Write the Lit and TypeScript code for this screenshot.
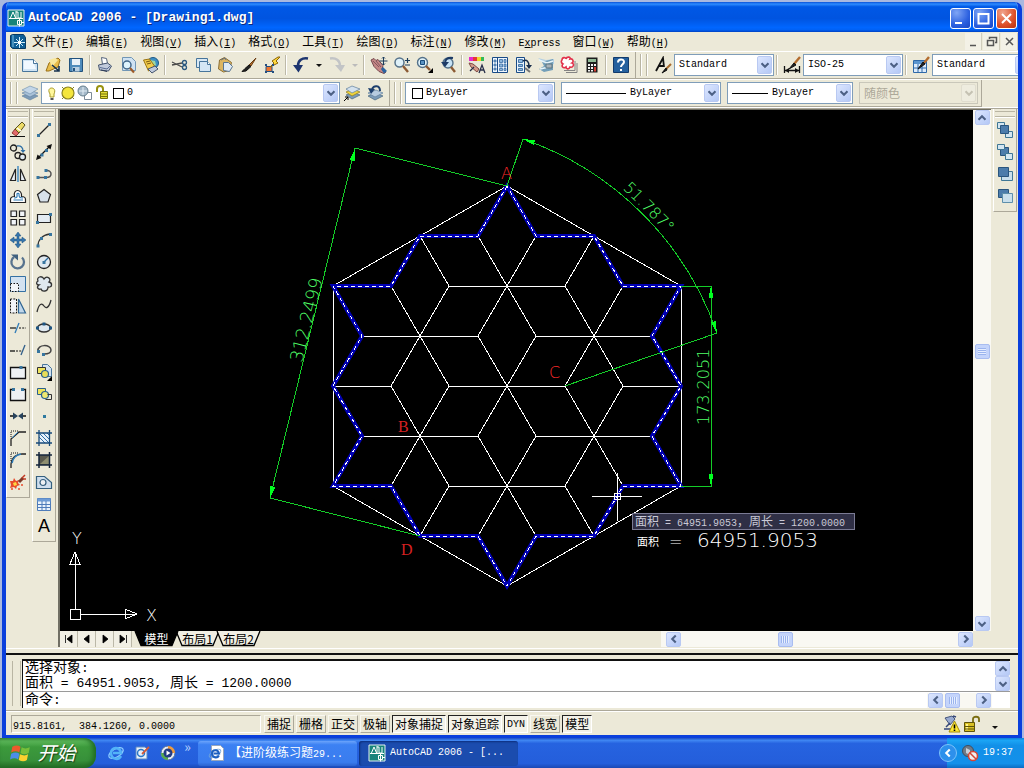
import { LitElement, html, svg, css, nothing } from "lit";
import { customElement } from "lit/decorators.js";
import { classMap } from "lit/directives/class-map.js";

const INK = "#1c3c5c";

/* Toolbar glyphs, all on an 18 x 18 grid. */
const icons: Record<string, unknown> = {
  new: svg`<path d="M1.5 3.5h11l4 4v8h-15z" fill="#cfe3f3" stroke="#47759b"/><path d="M3 5h9l3 8H3z" fill="#f0f8ff"/><path d="M12.5 3.5v4h4" fill="#fff" stroke="#47759b"/>`,
  open: svg`<path d="M2 15l3-8 9-5 2 2-2 7-9 4z" fill="#e9bd4b" stroke="#9a7118"/><path d="M5 4l6-2 3 2-6 7z" fill="#f8e79c"/><path d="M8 9l7 6m0-5v5h-5" stroke="#16324f" stroke-width="1.6" fill="none"/>`,
  save: svg`<path d="M2.500 2.500h13v13h-13z" fill="#4e8bbb" stroke="#22527d"/><path d="M5 3h8v6H5z" fill="#e8f1f8"/><path d="M5.500 11h7v4.500h-7z" fill="#b8cfe2"/><path d="M6 12h2v3H6z" fill="#22527d"/>`,
  print: svg`<path d="M5.500 1.500l5 1 1 5-5 1z" fill="#fff" stroke="#58677e"/><path d="M2.500 9l9-2 4 3-3 5-9-1z" fill="#c2cbdc" stroke="#45546f"/><path d="M4 11.500l7 1.500 3-3" stroke="#5b6d93" fill="none"/><path d="M5 14l6 1.500" stroke="#2f3d59"/>`,
  preview: svg`<path d="M3.500 1.500h9l4 4v9h-13z" fill="#cfe2f2" stroke="#7196b5"/><circle cx="8" cy="9" r="4" fill="#ddf3fd" stroke="#40678a" stroke-width="1.500"/><path d="M11 12l4 4.500" stroke="#9c5b2a" stroke-width="2.200"/>`,
  publish: svg`<circle cx="11" cy="7" r="5.500" fill="#3d8fc4" stroke="#205a86"/><path d="M8 4l5 1 1 4-3 2z" fill="#9fd8a0"/><path d="M1.500 4l6-1 5 7-6 5z" fill="#f2cc4b" stroke="#9b7413"/><path d="M4 6l4-1M5 8l4-1" stroke="#7a5910"/><path d="M6 13l7-3 3 3-6 4z" fill="#bfc9db" stroke="#44546e"/>`,
  cut: svg`<path d="M1 6l10 5M1 9l10-2" stroke="#4a4a4a" stroke-width="1.300"/><circle cx="13.500" cy="6.500" r="2" fill="none" stroke="#2c5a80" stroke-width="1.300"/><circle cx="13.500" cy="11.500" r="2" fill="none" stroke="#2c5a80" stroke-width="1.300"/>`,
  copy: svg`<path d="M2.500 2.500h11v9h-11z" fill="#d8e8f4" stroke="#47759b"/><path d="M5.500 5.500h8l3 3v7h-11z" fill="#d4e6f4" stroke="#47759b"/><path d="M13.500 5.500v3h3" fill="#fff" stroke="#47759b"/>`,
  paste: svg`<path d="M2.500 4l5-2.500 7 5-2 8-6 1.500-5-3z" fill="#dcb562" stroke="#8b6e33"/><path d="M6.500 6.500h5l4 4-3 5-6-1z" fill="#dfeaf5" stroke="#5a7590"/><path d="M4 4l4-2 1 2" fill="none" stroke="#63707f"/>`,
  brush: svg`<path d="M16 2l-7 7 2 1z" fill="#b7702c" stroke="#6a3c12"/><path d="M9 9l2 1.500-5 4.500-4 .5 3-3z" fill="#222" stroke="#111"/>`,
  match: svg`<path d="M3 10.500h6v5H3z" fill="#f0742d" stroke="#234e80"/><path d="M15 1l-6 4 2 2-4 4 8-4-2-2 4-4z" fill="#ffd93b" stroke="#8d6508"/><path d="M2 9h2M9 9h2M2 16h2M9 16h2" stroke="#234e80" stroke-width="2"/>`,
  undo: svg`<path d="M16 2.500C10 1.500 6 4.500 6 10" fill="none" stroke="#1d3570" stroke-width="2.600"/><path d="M1 9h10l-4.500 7.500z" fill="#1d3570"/>`,
  redo: svg`<path d="M2 2.500c6-1 10 2 10 7.500" fill="none" stroke="#c2c4c6" stroke-width="2.400"/><path d="M7 9h10l-4 7z" fill="#c2c4c6"/>`,
  pan: svg`<path d="M1 4l3-1.500 2 2 2-1 5 6-1 4 4 2.500-2 1.500-5-2-5-5z" fill="#c48786" stroke="#74484e"/><path d="M3 5l6 6M6 5l5 6" stroke="#855660"/><path d="M11 13l2-2 4 4-3 2.500z" fill="#2b62a0"/><path d="M13.500 1v8M9.500 5h8M12 2.500l1.500-1.500 1.500 1.500M12 7.500l1.500 1.500 1.500-1.500" stroke="${INK}" fill="none"/>`,
  zoom: svg`<circle cx="6.500" cy="6.500" r="4.500" fill="#dff1f9" stroke="#55728a" stroke-width="1.500"/><path d="M10 10l5 6" stroke="#8c5a34" stroke-width="2.400"/><path d="M12 4.500h5M14.500 2v5M12 9h5" stroke="${INK}" stroke-width="1.200"/>`,
  zoomwin: svg`<circle cx="6.500" cy="6.500" r="5" fill="#dff1f9" stroke="#55728a" stroke-width="1.400"/><path d="M4.500 4.500h4v4h-4z" fill="#5a93c3" stroke="#194b7b"/><path d="M10 10l4 4" stroke="#8c5a34" stroke-width="2.400"/><path d="M17 12v5h-5z" fill="#000"/>`,
  zoomprev: svg`<circle cx="9" cy="7" r="5" fill="#c7e2f4" stroke="#55728a" stroke-width="1.400"/><path d="M12 11l4 5" stroke="#8c5a34" stroke-width="2.400"/><path d="M14 2C8 1 6 4 6 7" stroke="#1d3b66" stroke-width="2.200" fill="none"/><path d="M2 6h8l-4 5z" fill="#1d3b66"/>`,
  props: svg`<path d="M1 1h4v4H1z" fill="#e22ad0"/><path d="M5 1h4v4H5z" fill="#e73737"/><path d="M9 1h4v4H9z" fill="#efd72b"/><path d="M13 1h3v4h-3z" fill="#31bb55"/><path d="M1 7l4 1 6 5-2 3-6-5z" fill="#d69b8b" stroke="#7c4943"/><path d="M2 15l4-4M11 17l3-8 3 8M12 14h4" stroke="#282f49" stroke-width="1.300" fill="none"/>`,
  design: svg`<path d="M1.500 1.500h15v15h-15z" fill="#eff7ff" stroke="#194b87"/><path d="M6.500 2v14" stroke="#194b87"/><path d="M3 4h2v2H3zM3 8h2v2H3zM3 12h2v2H3zM8.500 3.500h3v3h-3zM13 3.500h2v3h-2zM8.500 8h3v3h-3zM13 8h2v3h-2zM8.500 12.500h3v2h-3zM13 12.500h2v2h-2z" fill="#8eb7dc" stroke="#295f99" stroke-width=".7"/>`,
  tool: svg`<path d="M2.500 1.500h8v15h-8z" fill="#eaf4fd" stroke="#194b87"/><path d="M4.500 3.500h4v3h-4zM4.500 8.500h4v2h-4zM4.500 12.500h4v2h-4z" fill="#8eb7dc" stroke="#295f99" stroke-width=".8"/><path d="M9 5c4-2 6 1 6 5" stroke="#172c4a" stroke-width="1.500" fill="none"/><path d="M12 9h6l-3 4z" fill="#172c4a"/><path d="M11 12l5 4" stroke="#777" stroke-width="2"/>`,
  sheet: svg`<path d="M1 2l8 2 8-1v5l-7 2z" fill="#b3cfe2"/><path d="M5 6l11-3v11l-9 2-5-3 5-3z" fill="#739fb9"/><path d="M2 4l8 3 6-2M3 13l9-2" stroke="#e7f4fa" stroke-width="1.500" fill="none"/><path d="M9 8h6v4H9z" fill="#a8b2b8" stroke="#5b7481"/>`,
  markup: svg`<path d="M4 14.500h11V5M6 16.500h11V7" fill="none" stroke="#848484"/><path d="M2 4c0-3 4-3 4-1 1-3 5-2 4 0 3-1 4 3 2 4 3 1 1 5-2 4-1 3-4 2-4 0-3 2-5-1-3-3-2-1-2-3-1-4z" fill="#fff" stroke="#e2314b" stroke-width="1.600"/>`,
  calc: svg`<path d="M3.500 1.500h11v15h-11z" fill="#1d1d1d"/><path d="M5 3h8v3H5z" fill="#8fb996"/><path d="M5 8h2v2H5zM8 8h2v2H8zM11 8h2v2h-2zM5 11h2v2H5zM8 11h2v2H8zM5 14h2v1.500H5zM8 14h2v1.500H8z" fill="#f3f3f3"/><path d="M11 11h2v4.500h-2z" fill="#d23c33"/>`,
  help: svg`<path d="M1.500 1.500h15v15h-15z" fill="#24609e" stroke="#123b6c"/><path d="M6 6.500c0-4 6-4 6-.5 0 2-3 2.500-3 5" fill="none" stroke="#fff" stroke-width="2"/><path d="M8 13h2v2H8z" fill="#fff"/>`,
  textstyle: svg`<path d="M2 15L9 2l1 9M5 10h5" fill="none" stroke="#111" stroke-width="1.800"/><path d="M17 8l-5 5" stroke="#a86a2d" stroke-width="2"/><path d="M12 12l1 2-5 3z" fill="#111" stroke="#111"/>`,
  dimstyle: svg`<path d="M1.500 10v7M16.500 10v7M2 14.500h14" stroke="#111" stroke-width="1.300"/><path d="M2 14.500l4-2.500v5zM16 14.500l-4-2.500v5z" fill="#111"/><path d="M17 1l-6 7" stroke="#b36c2e" stroke-width="2.400"/><path d="M11 7l2 2-7 4z" fill="#222" stroke="#111"/>`,
  tabstyle: svg`<path d="M1.500 4.500h13v12h-13z" fill="#dcebfb" stroke="#2e68a8"/><path d="M2 5h12v3H2z" fill="#5b95cf"/><path d="M2 12h12M6 8v8M10 8v8" stroke="#2e68a8"/><path d="M17 1l-5 6" stroke="#b36c2e" stroke-width="2.400"/><path d="M11 6l2 2-7 5z" fill="#222" stroke="#111"/>`,
  layers: svg`<path d="M1 12l8-3 8 3-8 4z" fill="#7c9bb8" stroke="#5d7c9b" stroke-width=".6"/><path d="M1 9l8-3 8 3-8 4z" fill="#a9c1d8" stroke="#5d7c9b" stroke-width=".6"/><path d="M1 6l8-4 8 3-8 5z" fill="#c3d6e8" stroke="#6a8baa" stroke-width=".6"/>`,
  layercur: svg`<path d="M3 11l7-3 7 3-8 4z" fill="#7c9bb8" stroke="#47657f" stroke-width=".7"/><path d="M3 8l7-3 7 3-8 4z" fill="#f0d43b" stroke="#8d7a1c" stroke-width=".7"/><path d="M3 5l6-3 8 3-8 4z" fill="#d4e2ee" stroke="#5d7c9b" stroke-width=".7"/><path d="M1 17l4-4M2 13h3v3" stroke="#000" fill="none"/>`,
  layerprev: svg`<path d="M2 12l8-3 7 3-8 4z" fill="#7c9bb8" stroke="#47657f" stroke-width=".7"/><path d="M2 9l8-3 7 3-8 4z" fill="#b7cbe0" stroke="#5d7c9b" stroke-width=".7"/><path d="M14 7c0-6-6-6-8-2" stroke="#1e3f6d" stroke-width="2" fill="none"/><path d="M2 4l7 1-4 5z" fill="#1e3f6d"/>`,
  erase: svg`<path d="M1 15.500h15" stroke="#111"/><path d="M3 12l4 3 3-3-4-4z" fill="#e2696a" stroke="#8c3a34"/><path d="M6 8l4 4 6-8-3-3z" fill="#eedc68" stroke="#5b5320"/><path d="M8 7l4 3" stroke="#fff" stroke-width="1.500"/>`,
  copyobj: svg`<circle cx="4.500" cy="5" r="3" fill="none" stroke="#222" stroke-width="1.300"/><circle cx="9" cy="12.500" r="3" fill="none" stroke="#222" stroke-width="1.300"/><circle cx="13.500" cy="14" r="3" fill="#dfe9f2" stroke="#222" stroke-width="1.300"/><path d="M8 3c4-1 6 2 6 5" stroke="#2f6fa5" fill="none" stroke-width="1.300"/><path d="M11.500 7h5L14 10z" fill="#2f6fa5"/>`,
  mirror: svg`<path d="M6.500 4v11.500h-5zM11.500 4v11.500h5z" fill="#e8eff6" stroke="#222" stroke-width="1.200"/><path d="M9 1v16" stroke="#2f80bf" stroke-width="1.300"/>`,
  offset: svg`<path d="M1.500 15.500h15v-3c0-3-3-3-4-3 1-8-9-8-7 0-3 0-4 1-4 3z" fill="#fff" stroke="#222" stroke-width="1.200"/><path d="M4.500 13h9.500M5 11c4 0 3-2 3-4 0-1 2-1 2 0 0 3 0 4 4 4" stroke="#2f7cb8" fill="none" stroke-width="1.200"/>`,
  array: svg`<path d="M2 2h5.500v5.500H2zM10.500 2H16v5.500h-5.500zM2 10.500h5.500V16H2zM10.500 10.500H16V16h-5.500z" fill="#f2f5f8" stroke="#222" stroke-width="1.200"/>`,
  move: svg`<path d="M9 1l3 4h-2v3h3V6l4 3-4 3v-2h-3v3h2l-3 4-3-4h2v-3H5v2L1 9l4-3v2h3V5H6z" fill="#3474ac" stroke="#1e537f" stroke-width=".5"/>`,
  rotate: svg`<path d="M13 4.500A6.300 6.300 0 1 1 5 4" fill="none" stroke="#58738e" stroke-width="2.300"/><path d="M2 1.500h7v6z" fill="#41617f"/>`,
  scale: svg`<path d="M1.500 1.500h15v15h-15z" fill="#d3e2f0" stroke="#3471a4"/><path d="M1.500 8.500h8v8h-8z" fill="#f2f5f8" stroke="#111" stroke-dasharray="1.500 1.500"/>`,
  stretch: svg`<path d="M1.500 2v14h6V2z" fill="#f2f5f8" stroke="#111" stroke-dasharray="2 1.200"/><path d="M9.500 2v14h7z" fill="#c0d7ea" stroke="#2e6491" stroke-width="1.200"/>`,
  trim: svg`<path d="M1 9h6" stroke="#111" stroke-width="1.200"/><path d="M10 9h7" stroke="#111" stroke-dasharray="2 1.200"/><path d="M10 4l-4 10" stroke="#2f7cb8" stroke-width="1.300"/>`,
  extend: svg`<path d="M1 10h5" stroke="#111" stroke-width="1.300"/><path d="M7 10h6" stroke="#111" stroke-dasharray="2 1.200"/><path d="M16 4l-4 10" stroke="#2f5d88" stroke-width="1.300"/>`,
  breakpt: svg`<path d="M1.500 4.500h15v11h-15z" fill="#eef1f4" stroke="#111" stroke-width="1.300"/><path d="M10.500 3h3v3h-3z" fill="#37759f"/>`,
  breakobj: svg`<path d="M3 4.500H1.500v11h15v-11H14" fill="#eef1f4" stroke="#111" stroke-width="1.300"/><path d="M3 3h3v3H3zM12 3h3v3h-3z" fill="#37759f"/>`,
  join: svg`<path d="M1 9h5M12 9h5" stroke="#111" stroke-width="1.500"/><path d="M4 5.500L9 9l-5 3.500zM14 5.500L9 9l5 3.500z" fill="#27435d"/>`,
  chamfer: svg`<path d="M2 17V10l8-7h7" fill="none" stroke="#222" stroke-width="1.300"/><path d="M2 8V2h7" fill="none" stroke="#111" stroke-dasharray="1 1"/><path d="M3 9l6-6" stroke="#2f7cb8"/>`,
  fillet: svg`<path d="M2 17v-4C3 6 8 3 13 3h4" fill="none" stroke="#222" stroke-width="1.300"/><path d="M2 10V2h7" fill="none" stroke="#111" stroke-dasharray="1 1"/><path d="M3 12c1-6 4-8 9-9" stroke="#2f7cb8" fill="none" stroke-width="1.600"/>`,
  explode: svg`<path d="M1 8l3 0 1-3 2 3 3-1-1 3 2 2-3 1-1 3-2-2-4 1 1-3z" fill="#e8492b"/><path d="M4 10l3-1 1 3-3 1z" fill="#ffd540"/><path d="M10 9l4-4" stroke="#7d3a2a" stroke-width="3"/><path d="M13 5l3-3M14 6l3 0" stroke="#c23a24" stroke-width="1.500"/><path d="M2 16h2M12 12h2M9 16h2" stroke="#e8492b" stroke-width="1.500"/>`,
  line: svg`<path d="M3 15L15 3" stroke="#222" stroke-width="1.300"/><path d="M2 13h3v3H2zM13 2h3v3h-3z" fill="#37759f"/>`,
  xline: svg`<path d="M3 15L15 3" stroke="#111" stroke-width="1.300"/><path d="M1 17l1.500-5.500L6.500 15zM17 1l-1.500 5.500L11.500 3z" fill="#111"/><path d="M5.500 10.500h3v3h-3zM10 6h3v3h-3z" fill="#37759f"/>`,
  pline: svg`<path d="M3 12.500h8c7 0 6-7 1-7" fill="none" stroke="#555" stroke-width="1.500"/><path d="M1.500 11h3v3h-3zM9 11h3v3H9zM9.500 4h3v3h-3z" fill="#37759f"/>`,
  polygon: svg`<path d="M9 2.500l6.500 5-2.500 7.500H5L2.500 7.500z" fill="#d7e1ea" stroke="#222" stroke-width="1.200"/>`,
  rect: svg`<path d="M2.500 5.500h13v8h-13z" fill="#e3ebf2" stroke="#222" stroke-width="1.200"/><path d="M1 12h3v3H1zM14 4h3v3h-3z" fill="#37759f"/>`,
  arc: svg`<path d="M3 15C3 9 7 4 15 3" fill="none" stroke="#333" stroke-width="1.300"/><path d="M1.500 13.500h3v3h-3zM5 6h3v3H5zM14 2h3v3h-3z" fill="#37759f"/>`,
  circle: svg`<circle cx="9" cy="9" r="6.500" fill="#dfe8ef" stroke="#222" stroke-width="1.300"/><path d="M9 9l4-4" stroke="#2f6fa5" stroke-width="1.300"/><path d="M7.500 8h3v3h-3z" fill="#37759f"/>`,
  cloud: svg`<path d="M3 6c-2-4 4-6 6-2 3-4 8 0 5 3 4 1 3 6-1 5 0 5-6 5-7 2-3 1-5-2-2-4-3 0-3-3-1-4z" fill="#dfe8ef" stroke="#333" stroke-width="1.300"/>`,
  spline: svg`<path d="M2 15c2-9 5-9 7-6s5 2 7-6" fill="none" stroke="#333" stroke-width="1.300"/>`,
  ellipse: svg`<ellipse cx="9" cy="9" rx="6.500" ry="4" fill="#dfe8ef" stroke="#333" stroke-width="1.300"/><path d="M1 7.500h3v3H1zM14 7.500h3v3h-3zM7.500 3.500h3v3h-3z" fill="#1c5583"/>`,
  earc: svg`<path d="M3 10c-1-7 13-7 13-1 0 4-4 4-7 4" fill="none" stroke="#444" stroke-width="1.500"/><path d="M2 9h3v3H2zM7 12h3v3H7z" fill="#37759f"/>`,
  insert: svg`<path d="M7.500 1.500h5l4 4v8h-9z" fill="#d4e2ef" stroke="#47759b"/><path d="M2.500 4.500h8v6h-8z" fill="#efe45b" stroke="#333"/><circle cx="10" cy="11" r="3.500" fill="#e8dd58" stroke="#2a608d" stroke-width="1.200"/><path d="M17 13v5h-5z" fill="#000"/>`,
  block: svg`<path d="M2.500 3.500h8v6h-8z" fill="#efe45b" stroke="#2a608d"/><circle cx="10" cy="10" r="3.500" fill="#f0e870" stroke="#2a608d" stroke-width="1.200"/><path d="M12.500 9.500h4v5h-6" fill="none" stroke="#333"/>`,
  point: svg`<path d="M8 8h3v3H8z" fill="#2f7a9f"/>`,
  hatch: svg`<path d="M4 4h11v10H4z" fill="#e7f1fa"/><path d="M4 8l6 6M4 4l10 10M8 4l7 7M12 4l3 3" stroke="#2f6fa5"/><path d="M1 4h16M1 14h16M4 1v16M14.500 1v16" stroke="#174a7a" stroke-width="1.300"/>`,
  gradient: svg`<path d="M4 4h11v10H4z" fill="#59594e"/><path d="M5 13l9-8v8z" fill="#8e8e70"/><path d="M1 4h16M1 14h16M4 1v16M14.500 1v16" stroke="#15263c" stroke-width="1.500"/>`,
  region: svg`<path d="M1.500 3.500h8l7 6v6h-15z" fill="#cfdfee" stroke="#35607f" stroke-width="1.200"/><circle cx="8" cy="9.500" r="3" fill="#eef1f4" stroke="#35607f" stroke-width="1.200"/>`,
  table: svg`<path d="M2.500 3.500h13v12h-13z" fill="#eaf3fc" stroke="#4f7cba"/><path d="M2.500 3.500h13v3h-13z" fill="#6e9cd6"/><path d="M2.500 9.500h13M2.500 12.500h13M7 6v9M11 6v9" stroke="#4f7cba"/>`,
  front: svg`<path d="M1.500 1.500h7v6h-7zM9.500 10.500h7v6h-7z" fill="#d4e6f1" stroke="#3f7795"/><path d="M4.500 4.500h8v8h-8z" fill="#4c7cab" stroke="#2a557e"/>`,
  back: svg`<path d="M4.500 4.500h8v8h-8z" fill="#4c7cab" stroke="#2a557e"/><path d="M1.500 1.500h7v5h-7zM9.500 10.500h7v6h-7z" fill="#d4e6f1" stroke="#3f7795"/>`,
  above: svg`<path d="M5.500 6.500h11v9h-11z" fill="#c9dfec" stroke="#3f7795"/><path d="M2.500 2.500h10v9h-10z" fill="#4c7cab" stroke="#2a557e"/>`,
  under: svg`<path d="M2.500 2.500h10v8h-10z" fill="#4c7cab" stroke="#2a557e"/><path d="M6.500 6.500h10v9h-10z" fill="#c9dfec" stroke="#5d8fab"/>`,
  acad: svg`<path d="M1 1h16v16H1z" fill="#17847b" stroke="#e5f0f0"/><path d="M2 9.500h14M9 2v8" stroke="#fff"/><path d="M3 10l3-7 3 7M9 3h2v6h3v-6" fill="none" stroke="#fff"/><path d="M10.500 11.500h4v4h-4zM12.500 9.500v8M14 13.500h3" fill="none" stroke="#fff"/>`,
  doc: svg`<path d="M1.500 2.500l2-1h11l2 3v11h-13l-2-2z" fill="#0f5f96" stroke="#073b63"/><path d="M4 2v12" stroke="#7fc2e4"/><path d="M10.500 4v11M5 9.500h11M7 6l7 7M14 6l-7 7" stroke="#cfeefa"/><path d="M9 8h3v3H9z" fill="#fff"/>`,
  ie: svg`<ellipse cx="9" cy="9" rx="8" ry="4" transform="rotate(-30 9 9)" fill="none" stroke="#8fd0ff" stroke-width="1.300"/><path d="M14 12c-3 5-10 3-10-3s9-7 10 0H6" fill="none" stroke="#53b3f8" stroke-width="2.600"/>`,
  desk: svg`<path d="M3 3h9l2 2v10H3z" fill="#e8f1fb" stroke="#5f89c1"/><circle cx="8" cy="9" r="3.500" fill="none" stroke="#2a78c8" stroke-width="1.500"/><path d="M9 10l7-7" stroke="#d35b3a" stroke-width="1.800"/>`,
  media: svg`<circle cx="9" cy="9" r="7" fill="#e8ecf2" stroke="#4f6f9f"/><path d="M9 2a7 7 0 0 1 7 7H9z" fill="#f19a3c"/><path d="M9 16a7 7 0 0 1-7-7h7z" fill="#55a94e"/><circle cx="9" cy="9" r="4.500" fill="#223b84"/><path d="M7.500 6.500l4 2.500-4 2.500z" fill="#fff"/>`,
  page: svg`<path d="M4.500 1.500h9l3 3v12h-12z" fill="#fff" stroke="#98a6bb"/><ellipse cx="8" cy="9.500" rx="6.500" ry="3" transform="rotate(-30 8 9.500)" fill="none" stroke="#6fa4dc"/><path d="M12 11.500c-2 3.500-7 2-7-2s6-4.500 7 0H6.500" fill="none" stroke="#1b5fc0" stroke-width="2"/>`,
  flag: svg`<path d="M2 4q4-2 7 0l-1 5q-3-2-7 0z" fill="#ee5a2c"/><path d="M10 4.500q3 2 7 0l-1 5q-4 2-7 0z" fill="#78bf3a"/><path d="M1 10q4-2 7 0l-1 5q-3-2-7 0z" fill="#4c8de8"/><path d="M8.500 10.500q4 2 7 0l-1 5q-3 2-7 0z" fill="#fbd12f"/>`,
  mute: svg`<circle cx="7" cy="7" r="5.500" fill="#707a86" stroke="#3f4d5e"/><path d="M5 4l4 2v5l-4-2z" fill="#c9d1da"/><circle cx="12" cy="12" r="4.500" fill="#f0f0f0" stroke="#d64535" stroke-width="1.600"/><path d="M9 9l6 6" stroke="#d64535" stroke-width="1.500"/>`,
  comm: svg`<path d="M2 3l7-2 3 3-5 6z" fill="#98aad0" stroke="#45557b"/><path d="M3 12l4-4M1 14h7M10 1l3 1" stroke="#33467a" stroke-width="1.500"/><path d="M11.500 6l5.500 11H6z" fill="#ffe832" stroke="#a38d09"/><path d="M11.500 9.500v4M11.500 14.500v1.500" stroke="#000" stroke-width="1.600"/>`,
  lock: svg`<path d="M10 8V4c0-3 6-3 6 0v3" fill="none" stroke="#7a6d10" stroke-width="1.800"/><path d="M1.500 7.500h10v9h-10z" fill="#d8bf24" stroke="#5e5309"/><path d="M3 9h2v6H3z" fill="#fff491"/><path d="M2 11.500h9M2 14h9" stroke="#5e5309"/>`,
};

const icon = (name: string) =>
  html`<svg class="ico" viewBox="0 0 18 18" width="18" height="18" aria-hidden="true">${icons[name]}</svg>`;

/* Half-width runs are set in the monospaced face, full-width ones in the CJK face. */
const mix = (text: string) =>
  text.split(/([\x20-\x7e]+)/).filter(Boolean).map((run) =>
    /^[\x20-\x7e]/.test(run) ? html`<span class="hw">${run}</span>` : run);

const tools = (names: string[]) =>
  names.map((n) => n === "|" ? html`<span class="sep"></span>`
    : n === "v" ? html`<button class="drop" aria-label="history"><i></i></button>`
    : n === "w" ? html`<button class="drop off" aria-label="history" disabled><i></i></button>`
    : html`<button class="tool" aria-label=${n}>${icon(n)}</button>`);

const chevrons: Record<string, string> = {
  down: "M4 6l4 4 4-4", up: "M4 10l4-4 4 4", left: "M10 4L6 8l4 4", right: "M6 4l4 4-4 4",
};
const chevron = (dir: string) =>
  html`<svg class="chev" viewBox="0 0 16 16" width="14" height="14" aria-hidden="true"><path d=${chevrons[dir]}/></svg>`;
const arrow = (dir: string) => html`<button class="arrow" aria-label=${dir}>${chevron(dir)}</button>`;

const combo = (cls: string, label: string, value: string, lead: unknown = nothing, disabled = false) => html`
  <label class=${"combo " + cls + (disabled ? " off" : "")}>${lead}
    <select aria-label=${label} ?disabled=${disabled}><option>${value}</option></select>
    <span class="arrow">${chevron("down")}</span>
  </label>`;

/* ---- drawing geometry ---- */
type Pt = [number, number];
const DX = 87, DY = 50, CX = 507, CY = 386;
const at = (u: number, v: number): Pt => [CX + u * DX / 3, CY + v * DY];
const inner: Pt[] = [[0, 0], [0, -2], [0, 2], [-3, -1], [3, -1], [-3, 1], [3, 1]];
const spokes: Pt[] = [[2, 0], [-2, 0], [1, 1], [-1, 1], [1, -1], [-1, -1]];
const edges: [Pt, Pt][] = [
  ...inner.flatMap(([u, v]) => spokes.map(([a, b]): [Pt, Pt] => [at(u, v), at(u + a, v + b)])),
  [at(-3, -3), at(-2, -2)], [at(3, -3), at(2, -2)], [at(-6, 0), at(-4, 0)],
  [at(6, 0), at(4, 0)], [at(-3, 3), at(-2, 2)], [at(3, 3), at(2, 2)],
];
const pts = (list: Pt[]) => list.map(([u, v]) => at(u, v).join()).join(" ");
const hexagon = pts([[0, -4], [6, -2], [6, 2], [0, 4], [-6, 2], [-6, -2]]);
const leftStar: Pt[] = [[0, -4], [-1, -3], [-3, -3], [-4, -2], [-6, -2], [-5, -1], [-6, 0], [-5, 1], [-6, 2], [-4, 2], [-3, 3], [-1, 3], [0, 4]];
const star = pts([...leftStar, ...leftStar.slice(1, -1).reverse().map(([u, v]): Pt => [-u, v])]);
const head = (x: number, y: number, deg: number) =>
  svg`<path class="head" d="M0 0L-12 -2.500V2.500Z" transform="translate(${x} ${y}) rotate(${deg})"/>`;

const drawing = html`
  <svg class="drawing" role="img" aria-label="Drawing1.dwg">
    <g transform="translate(-60 -110)">
      <g class="white">
        <polygon points=${hexagon}/>
        ${edges.map(([a, b]) => svg`<line x1=${a[0]} y1=${a[1]} x2=${b[0]} y2=${b[1]}/>`)}
      </g>
      <polygon class="glow" points=${star}/>
      <polygon class="dash" points=${star}/>
      <g class="green">
        <path d="M507 186L355 148L270 498L420 536M507 186L523 139A314 314 0 0 1 717 333L565 386M681 286H712M681 486H712M711 286V486"/>
        ${head(355, 149, -76)}${head(270, 498, 104)}${head(523, 139, 198)}${head(717, 333, 72)}${head(711, 286, -90)}${head(711, 486, 90)}
        <text font-size="18" transform="translate(302 363) rotate(-76)">312.2499</text>
        <text font-size="16" text-anchor="middle" transform="translate(645 211) rotate(45)">51.787°</text>
        <text font-size="16" transform="translate(709 425) rotate(-90)">173.2051</text>
      </g>
      <g class="red">
        <text x="501" y="179">A</text><text x="549" y="378">C</text>
        <text class="serif" x="398" y="432">B</text><text class="serif" x="401" y="555">D</text>
      </g>
      <g class="white">
        <path d="M592 496H642M617 473V521M614 493h6v6h-6zM70 609h10v10h-10zM75 609V552l-5 12h10l-5 -12M80 614H137l-12 -5v10l12 -5"/>
      </g>
      <g class="label">
        <text x="72" y="544">Y</text><text x="146" y="621">X</text>
        <text class="cjk" x="637" y="546">面积</text>
        <text x="669" y="547">=</text><text font-size="20" x="697" y="547">64951.9053</text>
      </g>
    </g>
  </svg>`;

@customElement("app-root")
export class AppRoot extends LitElement {
  static styles = css`
    * { box-sizing: border-box; }
    :host {
      display: flex; flex-direction: column; height: 100vh; overflow: hidden; background: #a9b8df;
      font: 12px/16px "Noto Sans CJK SC", "Liberation Sans", sans-serif; color: #000;
    }
    button, select, input { font: inherit; color: inherit; margin: 0; padding: 0; border: 0; background: none; }
    button { display: flex; align-items: center; justify-content: center; white-space: nowrap; }
    .hw { font-family: "Liberation Mono", monospace; font-size: 10px; white-space: pre; }
    .ico, .chev { display: block; flex: none; }
    .window {
      flex: 1; min-height: 0; display: flex; flex-direction: column; margin: 2px 2px 0;
      border: solid #0a3fdc; border-width: 0 4px 3px; border-radius: 7px 7px 0 0; background: #ece9d8; overflow: hidden;
    }
    .title {
      flex: none; height: 30px; margin: 0 -4px; padding: 2px 5px 0 5px; display: flex; align-items: center; gap: 3px;
      background: linear-gradient(#0a52d8, #2d8bff 7%, #0058e6 16%, #0054e0 55%, #0066ff 85%, #0061f5 93%, #0040c0);
      color: #fff; font: bold 13px/18px "Liberation Mono", monospace; text-shadow: 1px 1px #0b2a80; white-space: pre;
    }
    .title h1 { flex: 1; font: inherit; margin: 0; }
    .cap { width: 21px; height: 21px; border: 1px solid #fff; border-radius: 3px; background: radial-gradient(circle at 30% 20%, #7fa5f5, #2c61e0 60%, #1746c4); }
    .cap.close { background: radial-gradient(circle at 30% 20%, #f0a58d, #dd4f28 60%, #b6320f); }
    .cap path, .mdi path { fill: none; stroke: #fff; stroke-width: 2; }
    .caps { display: flex; gap: 2px; }
    .menu { flex: none; height: 20px; display: flex; align-items: center; padding-left: 3px; border-bottom: 1px solid #fff; }
    .menu nav { flex: 1; display: flex; gap: 12px; margin-left: 5px; padding-top: 1px; }
    .menu a { color: #000; text-decoration: none; white-space: nowrap; }
    .mdi { display: flex; gap: 1px; }
    .mdi button { width: 17px; height: 17px; background: #f3f1e6; border-right: 1px solid #d0cdbd; }
    .mdi path { stroke: #565656; stroke-width: 1.5; }
    .row { flex: none; height: 28px; display: flex; overflow: hidden; border-bottom: 1px solid #fff; }
    .bar { flex: none; display: flex; align-items: center; padding: 0 3px 0 12px; border-right: 1px solid #aca899; border-bottom: 1px solid #aca899; position: relative; }
    .bar + .bar { padding-left: 15px; }
    .bar::before { content: ""; position: absolute; left: 4px; top: 2px; bottom: 2px; width: 5px; border: solid #b9b5a3; border-width: 0 1px; box-shadow: 1px 0 #fff, inset 1px 0 #fff; }
    .tool { width: 23px; height: 22px; flex: none; }
    .sep { flex: none; width: 1px; height: 20px; margin: 0 3px 0 2px; background: #bdb9a8; box-shadow: 1px 0 #fff; }
    .drop { width: 13px; height: 20px; }
    .drop i { border: 3px solid transparent; border-top-color: #111; border-bottom: 0; }
    .drop.off i { border-top-color: #bbb; }
    .combo { flex: none; height: 22px; display: flex; align-items: center; padding: 1px 1px 1px 4px; border: 1px solid #7f9db9; background: #fff; font-family: "Liberation Mono", monospace; font-size: 10px; }
    .combo select { appearance: none; flex: 1; min-width: 0; outline: 0; }
    .combo .arrow { height: 18px; }
    .combo.off { background: #ece9d8; border-color: #c9c7ba; color: #aca899; font-family: "Noto Sans CJK SC", sans-serif; font-size: 12px; }
    .combo.off .arrow { background: #eeecdf; border-color: #e0ddcf; }
    .combo.off .chev path { stroke: #c5c2b3; }
    .combo.off select { opacity: 1; }
    .box { width: 11px; height: 11px; flex: none; border: 1px solid #000; background: #fff; margin: 0 3px 0 2px; }
    .rule { flex: none; height: 1px; background: #000; margin-right: 4px; }
    .w60 { width: 60px; } .w36 { width: 36px; }
    .layer { width: 299px; } .style { width: 100px; } .color { width: 150px; } .ltype { width: 160px; } .lweight { width: 126px; } .plot { width: 119px; }
    .gap { margin-right: 6px; }
    .arrow { display: flex; align-items: center; justify-content: center; flex: none; width: 15px; height: 15px; border: 1px solid #b9c9f2; border-radius: 2px; background: linear-gradient(135deg, #dce6fe, #b4c8f6); }
    .chev path { fill: none; stroke: #4d6185; stroke-width: 2.4; }
    .main { flex: 1; min-height: 0; display: flex; border-top: 1px solid #aca899; }
    .side { flex: none; display: flex; align-items: flex-start; gap: 2px; padding-right: 2px; }
    .vbar { width: 24px; padding: 7px 0 4px; display: flex; flex-direction: column; align-items: center; border-right: 1px solid #aca899; border-bottom: 1px solid #aca899; border-left: 1px solid #fff; }
    .vbar::before { content: ""; width: 20px; height: 4px; margin-top: -5px; margin-bottom: 2px; border: solid #b9b5a3; border-width: 1px 0; box-shadow: 0 1px #fff; }
    .vbar .letter { font: 18px/22px "Liberation Sans", sans-serif; }
    .doc { flex: 1; min-width: 0; display: grid; grid-template: 1fr 16px / 1fr 18px; border: solid #716f64; border-width: 1px 0 0 2px; }
    .canvas { position: relative; background: #000; overflow: hidden; }
    .drawing { display: block; width: 100%; height: 100%; shape-rendering: crispEdges; font-family: "DejaVu Sans", sans-serif; font-weight: 200; }
    .drawing .white > * { fill: none; stroke: #fff; stroke-width: 1; }
    .drawing .glow { fill: none; stroke: #0000b4; stroke-width: 4; shape-rendering: auto; }
    .dash { fill: none; stroke: #fff; stroke-width: 1; stroke-dasharray: 4 3; }
    .green > path { fill: none; stroke: #14cc28; stroke-width: 1; }
    .green > .head { fill: #00ff20; stroke: none; }
    .green text { fill: #50ff68; }
    .red text { fill: #ff2a2a; font-size: 16px; }
    .red .serif { font-family: "Liberation Serif", serif; font-weight: 400; fill: #d62222; }
    .label text { fill: #fff; font-size: 16px; }
    .label [font-size="20"] { font-size: 20px; }
    .label .cjk { font: 11px "Noto Sans CJK SC", sans-serif; }
    .tip { position: absolute; left: 572px; top: 403px; height: 17px; padding: 0 9px 0 2px; background: #2f2f45; border: 1px solid #7b7b94; color: #c9c9d6; line-height: 14px; white-space: pre; }
    .scroll { display: flex; background: #f9f8f2; align-items: center; }
    .scroll.v { flex-direction: column; }
    .track { flex: 1; display: flex; }
    .track::before { content: ""; flex: 37; }
    .track::after { content: ""; flex: 63; }
    .v .track { flex-direction: column; }
    .v .track::before { flex: 46; }
    .v .track::after { flex: 54; }
    .thumb { width: 15px; height: 15px; border: 1px solid #a9bdf0; border-radius: 2px; background: repeating-linear-gradient(90deg, #9bb4ee 0 1px, #e6eeff 1px 2px) center / 8px 7px no-repeat, #c4d4fb; }
    .v .thumb { background: repeating-linear-gradient(#9bb4ee 0 1px, #e6eeff 1px 2px) center / 8px 7px no-repeat, #c4d4fb; }
    .tabs { display: flex; align-items: stretch; min-width: 0; overflow: hidden; }
    .tabs .nav { width: 18px; background: #f1efe4; border-right: 1px solid #bbb8a8; }
    .nav path { fill: #000; stroke: #000; }
    .sheets { flex: 1; display: flex; margin-left: 2px; }
    .tab { display: grid; width: 45px; margin-right: -4px; }
    .tab > * { grid-area: 1 / 1; }
    .tab svg { width: 100%; height: 100%; fill: #f1efe4; stroke: #000; stroke-width: 1.3; }
    .tab.on { color: #fff; z-index: 1; }
    .tab.on svg { fill: #000; }
    .tabs .scroll { width: 312px; padding-left: 5px; }
    .right { flex: none; width: 27px; padding-left: 2px; }
    .split { flex: none; height: 7px; border-top: 1px solid #fff; border-bottom: 2px solid #111; margin-top: 1px; }
    .cmd { flex: none; height: 56px; padding: 4px 8px 2px 16px; position: relative; border-bottom: 1px solid #aca899; }
    .cmd::before { content: ""; position: absolute; left: 6px; top: 6px; bottom: 4px; width: 7px; border: solid #b9b5a3; border-width: 0 1px; }
    .pane { height: 100%; background: #fff; border: solid #111; border-width: 2px 0 0 1px; display: flex; flex-direction: column; font: 14px/15px "Liberation Mono", "Noto Sans CJK SC", monospace; }
    .pane .hw { font-size: 13px; }
    .history { flex: 1; display: flex; border-bottom: 1px solid #9a9a9a; }
    .history p { margin: 0; padding-left: 2px; flex: 1; white-space: pre; }
    .history .scroll { justify-content: space-between; }
    .prompt { flex: none; height: 16px; display: flex; align-items: center; }
    .prompt label { flex: none; padding-left: 2px; }
    .prompt input { flex: 1; min-width: 0; outline: 0; }
    .prompt .scroll { gap: 2px; margin-right: 18px; padding: 0 1px; }
    .gapped { margin-right: 14px; }
    .status { flex: none; height: 24px; display: flex; align-items: center; gap: 2px; padding: 1px 0 0 5px; border-top: 1px solid #fff; }
    .coord { width: 250px; height: 18px; padding-left: 1px; margin-right: 1px; border: 1px solid #aca899; border-right-color: #fff; border-bottom-color: #fff; }
    .coord .hw, .status .hw { line-height: 15px; }
    .mode { height: 18px; padding: 0 2px; border: 1px solid #f8f7f0; border-right-color: #aca899; border-bottom-color: #aca899; }
    .mode.on { border-color: #222 #fff #fff #222; background: #f3f1e8; }
    .statustray { margin-left: auto; display: flex; align-items: center; gap: 2px; padding-right: 17px; }
    .statustray .drop { margin-left: 5px; padding-top: 6px; }
    .taskbar { flex: none; height: 30px; display: flex; align-items: center; color: #fff; background: linear-gradient(#1f4fc4, #3f86f2 8%, #2663e0 18%, #245edb 85%, #1b48b4); }
    .start { width: 96px; height: 100%; padding: 0 18px 2px 8px; gap: 6px; border-radius: 0 12px 12px 0; background: linear-gradient(#4f9b4a, #5cb85a 10%, #3c9a3c 30%, #37903a 75%, #256d27); box-shadow: inset -3px 0 5px #1f6a22; font-size: 19px; font-style: italic; text-shadow: 1px 1px 1px #1b3f16; }
    .quick { width: 102px; display: flex; justify-content: space-between; padding: 0 7px 0 11px; }
    .quick > span { margin-top: -6px; font-size: 14px; color: #b9d4ff; }
    .task { width: 159px; height: 25px; margin-right: 2px; padding-left: 9px; gap: 4px; justify-content: flex-start; border-radius: 3px; background: linear-gradient(#6ba4fb, #3c81f3 15%, #3a7cee 85%, #2c63cf); }
    .task.on { background: #1b4cae; box-shadow: inset 1px 1px 2px #0c2e7c; }
    .tray { margin-left: auto; height: 100%; width: 77px; display: flex; align-items: center; gap: 4px; padding-right: 12px; background: linear-gradient(#1180d8, #1ba5f5 8%, #1290e8 25%, #1390ea 85%, #0c6cc2); }
    .tray .hw { margin-left: auto; }
    .expand { width: 18px; height: 18px; margin-left: -8px; border-radius: 50%; background: #2d90ec; border: 1px solid #7cc4fa; flex: none; }
    .expand .chev path { stroke: #fff; }
  `;

  render() {
    const menus: [string, string][] = [["文件", "F"], ["编辑", "E"], ["视图", "V"], ["插入", "I"], ["格式", "O"], ["工具", "T"], ["绘图", "D"], ["标注", "N"], ["修改", "M"], ["", ""], ["窗口", "W"], ["帮助", "H"]];
    const modes: [string, boolean][] = [["捕捉", false], ["栅格", false], ["正交", false], ["极轴", false], ["对象捕捉", true], ["对象追踪", true], ["DYN", true], ["线宽", false], ["模型", true]];
    return html`
      <div class="window">
        <header class="title">
          ${icon("acad")}<h1>AutoCAD 2006 - [Drawing1.dwg]</h1>
          <div class="caps">
            <button class="cap" aria-label="最小化"><svg width="19" height="19"><path d="M4 14h7"/></svg></button>
            <button class="cap" aria-label="最大化"><svg width="19" height="19"><path d="M4 5h11M4.500 4v10.500h10V4"/></svg></button>
            <button class="cap close" aria-label="关闭"><svg width="19" height="19"><path d="M5 5l9 9M14 5l-9 9"/></svg></button>
          </div>
        </header>
        <div class="menu">
          ${icon("doc")}
          <nav>${menus.map(([name, key]) => name
            ? html`<a href="#">${name}<span class="hw">(<u>${key}</u>)</span></a>`
            : html`<a href="#"><span class="hw">E<u>x</u>press</span></a>`)}</nav>
          <div class="mdi">
            <button aria-label="最小化"><svg width="15" height="15"><path d="M4 11.500h6"/></svg></button>
            <button aria-label="还原"><svg width="15" height="15"><path d="M5.500 5V3.500h7v5H11M3.500 6.500h6v5h-6z"/></svg></button>
            <button aria-label="关闭"><svg width="15" height="15"><path d="M4 4l7 7M11 4l-7 7"/></svg></button>
          </div>
        </div>
        <div class="row">
          <div class="bar">${tools(["new", "open", "save", "|", "print", "preview", "publish", "|", "cut", "copy", "paste", "brush", "match", "|", "undo", "v", "redo", "w", "|", "pan", "zoom", "zoomwin", "zoomprev", "|", "props", "design", "tool", "sheet", "markup", "calc", "|", "help"])}</div>
          <div class="bar">
            ${tools(["textstyle"])}${combo("style", "文字样式", "Standard")}<span class="sep"></span>
            ${tools(["dimstyle"])}${combo("style", "标注样式", "ISO-25")}<span class="sep"></span>
            ${tools(["tabstyle"])}${combo("style", "表格样式", "Standard")}
          </div>
        </div>
        <div class="row">
          <div class="bar">
            ${tools(["layers"])}
            ${combo("layer", "图层", "0", html`
              <svg width="65" height="18" aria-hidden="true">
                <path d="M4 10C-1 2 12 2 8 10v3H4z" fill="#fff79c" stroke="#a89a2d"/><path d="M4.500 15h3" stroke="#555" stroke-width="2"/>
                <circle cx="22" cy="9" r="6" fill="#f4e53c" stroke="#8b8420" stroke-width="1.200"/><path d="M16 3l2 2M28 3l-2 2M16 15l2-2M28 15l-2-2" stroke="#8b8420"/>
                <path d="M38.500 8.500h7v7h-7z" fill="#fff" stroke="#7d8b99"/><circle cx="37" cy="7" r="5" fill="#a5b9c9" stroke="#68818f"/><path d="M33 7h8M37 3v8" stroke="#e3eef5"/>
                <path d="M51 8V5c0-4 6-4 6 0v2" fill="none" stroke="#98920f" stroke-width="2"/><path d="M54.500 7.500h7v7h-7z" fill="#e4dc33" stroke="#77720d"/><path d="M55 10h6M55 12.500h6" stroke="#77720d"/>
              </svg><span class="box"></span>`)}
            ${tools(["layercur", "layerprev"])}
          </div>
          <div class="bar">
            ${combo("color gap", "颜色", "ByLayer", html`<span class="box"></span>`)}
            ${combo("ltype gap", "线型", "ByLayer", html`<span class="rule w60"></span>`)}
            ${combo("lweight gap", "线宽", "ByLayer", html`<span class="rule w36"></span>`)}
            ${combo("plot", "打印样式", "随颜色", nothing, true)}
          </div>
        </div>
        <div class="main">
          <div class="side">
            <div class="vbar">${tools(["erase", "copyobj", "mirror", "offset", "array", "move", "rotate", "scale", "stretch", "trim", "extend", "breakpt", "breakobj", "join", "chamfer", "fillet", "explode"])}</div>
            <div class="vbar">${tools(["line", "xline", "pline", "polygon", "rect", "arc", "circle", "cloud", "spline", "ellipse", "earc", "insert", "block", "point", "hatch", "gradient", "region", "table"])}<button class="tool letter">A</button></div>
          </div>
          <div class="doc">
            <div class="canvas">${drawing}<div class="tip" role="tooltip">${mix("面积 = 64951.9053，周长 = 1200.0000")}</div></div>
            <div class="scroll v">${arrow("up")}<div class="track"><div class="thumb"></div></div>${arrow("down")}</div>
            <div class="tabs">
              ${["M4.500 4v8M11 4v8L6 8z", "M10 4v8L5 8z", "M6 4v8l5-4z", "M5 4v8l5-4zM11.500 4v8"].map((d) =>
                html`<button class="nav" aria-label="布局"><svg width="16" height="16"><path d=${d} stroke-width=".8"/></svg></button>`)}
              <div class="sheets">${["模型", "布局1", "布局2"].map((t, i) => html`
                <button class=${classMap({ tab: true, on: i === 0 })}>
                  <svg viewBox="0 0 45 16" preserveAspectRatio="none"><path d="M1 0l6 14.500h31L44 0"/></svg><span>${t}</span>
                </button>`)}</div>
              <div class="scroll">${arrow("left")}<div class="track"><div class="thumb"></div></div>${arrow("right")}</div>
            </div>
            <span></span>
          </div>
          <div class="right"><div class="vbar">${tools(["front", "back", "above", "under"])}</div></div>
        </div>
        <div class="split"></div>
        <div class="cmd">
          <div class="pane">
            <div class="history">
              <p>${mix("选择对象:")}<br>${mix("面积 = 64951.9053, 周长 = 1200.0000")}</p>
              <div class="scroll v">${arrow("up")}${arrow("down")}</div>
            </div>
            <div class="prompt">
              <label for="command">${mix("命令:")}</label><input id="command" type="text" autocomplete="off">
              <div class="scroll">${arrow("left")}<div class="thumb gapped"></div>${arrow("right")}</div>
            </div>
          </div>
        </div>
        <footer class="status">
          <div class="coord">${mix("915.8161,  384.1260, 0.0000")}</div>
          ${modes.map(([t, on]) => html`<button class=${classMap({ mode: true, on })} aria-pressed=${on}>${mix(t)}</button>`)}
          <div class="statustray">${icon("comm")}${icon("lock")}${tools(["v"])}</div>
        </footer>
      </div>
      <div class="taskbar">
        <button class="start">${html`<svg class="ico" viewBox="0 0 18 18" width="21" height="21" aria-hidden="true">${icons.flag}</svg>`}开始</button>
        <div class="quick">${icon("ie")}${icon("desk")}${icon("media")}<span>»</span></div>
        <button class="task">${icon("page")}<span>${mix("【进阶级练习题29...")}</span></button>
        <button class="task on">${icon("acad")}${mix("AutoCAD 2006 - [...")}</button>
        <div class="tray"><button class="expand" aria-label="展开">${chevron("left")}</button>${icon("mute")}${mix("19:37")}</div>
      </div>`;
  }
}
